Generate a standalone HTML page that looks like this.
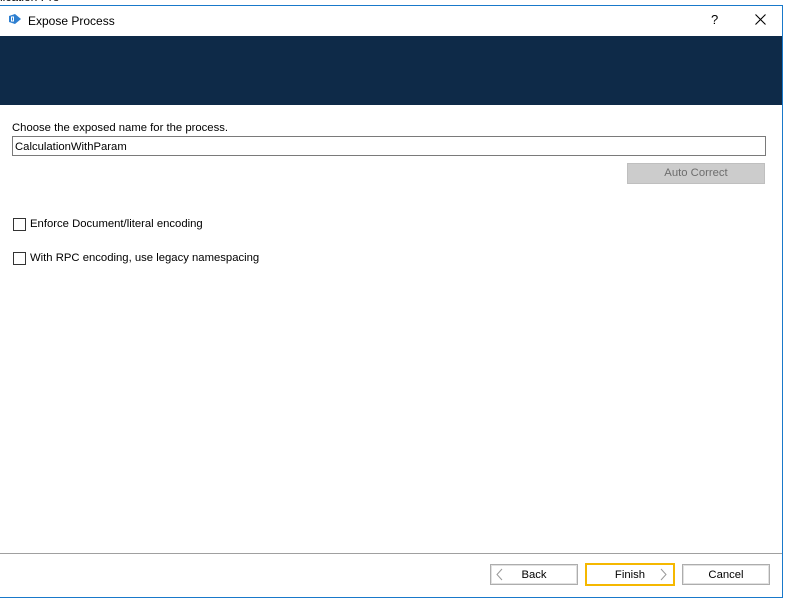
<!DOCTYPE html>
<html><head><style>
body{margin:0;width:787px;height:599px;background:#fff;position:relative;overflow:hidden;font-family:"Liberation Sans",sans-serif;font-size:11.3px;color:#000}
.a{position:absolute}
.btn{position:absolute;background:#fff;border:1px solid #adadad;box-shadow:inset 0 0 0 1px #e1e1e1;text-align:center;line-height:20px;box-sizing:border-box}
.cb{position:absolute;width:13px;height:13px;border:1px solid #333;box-sizing:border-box;background:#fff}
</style></head><body>
<div class="a" style="left:0;top:-10px;font-size:12px;color:#000">lication Pro</div>
<div class="a" style="left:0;top:5px;width:783px;height:593px;border-top:1px solid #1979ca;border-right:1px solid #1979ca;border-bottom:1px solid #1979ca;box-sizing:border-box;background:#fff"></div>
<svg class="a" style="left:8px;top:13px" width="14" height="12" viewBox="0 0 14 12"><path d="M1 3 L7 1 L13 6 L7 11 L1 9 Z" fill="#2e7fd0"/><rect x="3" y="3.5" width="3" height="5" fill="#fff"/><rect x="4" y="4.5" width="1" height="3" fill="#2e7fd0"/></svg>
<div class="a" style="left:28px;top:14px;font-size:12px">Expose Process</div>
<div class="a" style="left:711px;top:12px;font-size:13px">?</div>
<svg class="a" style="left:755px;top:14px" width="11" height="11"><path d="M0.5 0.5L10.5 10.5M10.5 0.5L0.5 10.5" stroke="#000" stroke-width="1.1"/></svg>
<div class="a" style="left:0;top:36px;width:782px;height:69px;background:#0e2a48"></div>
<div class="a" style="left:12px;top:122px">Choose the exposed name for the process.</div>
<div class="a" style="left:12px;top:136px;width:754px;height:20px;border:1px solid #7a7a7a;box-sizing:border-box;padding:3px 2px 0;line-height:14px">CalculationWithParam</div>
<div class="a" style="left:627px;top:163px;width:138px;height:21px;background:#cccccc;border:1px solid #bfbfbf;box-sizing:border-box;text-align:center;line-height:19px;color:#6d6d6d">Auto Correct</div>
<div class="cb" style="left:13px;top:218px"></div>
<div class="a" style="left:30px;top:218px">Enforce Document/literal encoding</div>
<div class="cb" style="left:13px;top:252px"></div>
<div class="a" style="left:30px;top:252px">With RPC encoding, use legacy namespacing</div>
<div class="a" style="left:0;top:553px;width:782px;height:1px;background:#a0a0a0"></div>
<div class="btn" style="left:490px;top:564px;width:88px;height:21px">Back</div>
<svg class="a" style="left:496px;top:568px" width="7" height="13"><path d="M6 1L1 6.5L6 12" fill="none" stroke="#999"/></svg>
<div class="btn" style="left:585px;top:563px;width:90px;height:23px;border:2px solid #f5b800;box-shadow:none;line-height:20px">Finish</div>
<svg class="a" style="left:660px;top:568px" width="7" height="13"><path d="M1 1L6 6.5L1 12" fill="none" stroke="#999"/></svg>
<div class="btn" style="left:682px;top:564px;width:88px;height:21px">Cancel</div>
</body></html>
